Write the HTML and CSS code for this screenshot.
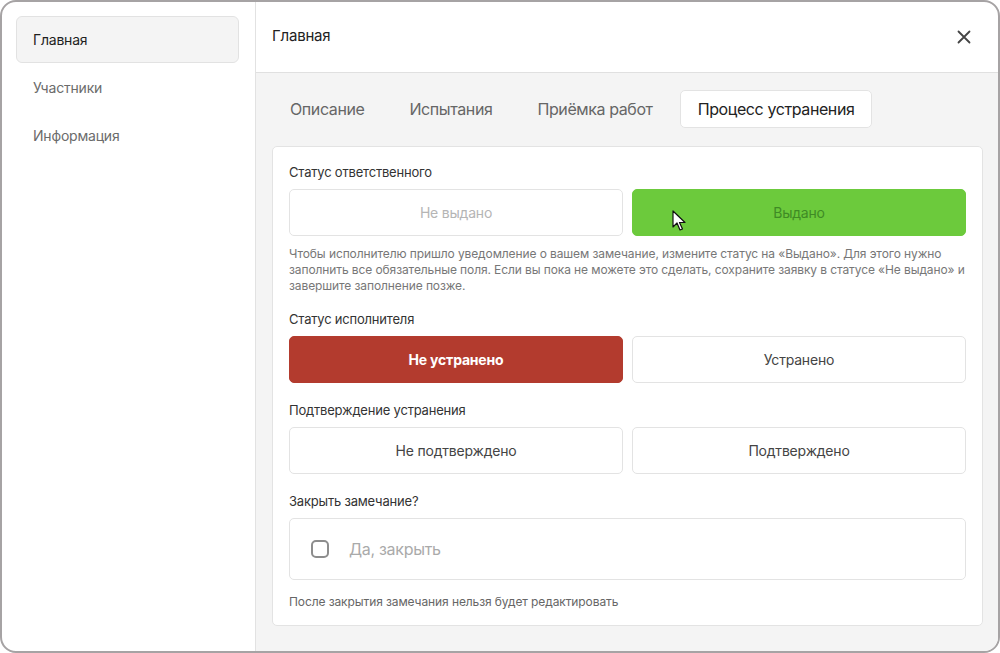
FILE: index.html
```html
<!DOCTYPE html>
<html lang="ru">
<head>
<meta charset="utf-8">
<link rel="stylesheet" href="styles.css">
</head>
<body>
<div class="frame">
  <aside class="sidebar">
    <div class="nav-item active">Главная</div>
    <div class="nav-item">Участники</div>
    <div class="nav-item">Информация</div>
  </aside>
  <main class="main">
    <header class="header">
      <div class="title">Главная</div>
      <svg class="close" width="14" height="14" viewBox="0 0 14 14"><path d="M1.5 1.5 L12.5 12.5 M12.5 1.5 L1.5 12.5" stroke="#444" stroke-width="1.8" stroke-linecap="round"/></svg>
    </header>
    <div class="content">
      <nav class="tabs">
        <div class="tab">Описание</div>
        <div class="tab">Испытания</div>
        <div class="tab">Приёмка работ</div>
        <div class="tab active">Процесс устранения</div>
      </nav>
      <section class="card">
        <div class="label">Статус ответственного</div>
        <div class="btn-row">
          <div class="btn muted">Не выдано</div>
          <div class="btn green">Выдано
            <svg class="cursor" width="14" height="22" viewBox="0 0 14 22"><path d="M1 1 L1 17 L5 13 L8 20 L10.5 19 L7.5 12.5 L13 12.5 Z" fill="#fff" stroke="#111" stroke-width="1.2" stroke-linejoin="round"/></svg>
          </div>
        </div>
        <p class="help">Чтобы исполнителю пришло уведомление о вашем замечание, измените статус на «Выдано». Для этого нужно заполнить все обязательные поля. Если вы пока не можете это сделать, сохраните заявку в статусе «Не выдано» и завершите заполнение позже.</p>
        <div class="label">Статус исполнителя</div>
        <div class="btn-row">
          <div class="btn red">Не устранено</div>
          <div class="btn">Устранено</div>
        </div>
        <div class="label">Подтверждение устранения</div>
        <div class="btn-row">
          <div class="btn">Не подтверждено</div>
          <div class="btn">Подтверждено</div>
        </div>
        <div class="label">Закрыть замечание?</div>
        <div class="check-box">
          <span class="check"></span>
          <span class="check-text">Да, закрыть</span>
        </div>
        <p class="note">После закрытия замечания нельзя будет редактировать</p>
      </section>
    </div>
  </main>
</div>
</body>
</html>
```

FILE: styles.css
```css
* { box-sizing: border-box; }
html, body { margin: 0; padding: 0; background: #fff; }
body {
  font-family: Inter, "Noto Sans", sans-serif;
  color: #333;
}
.frame {
  width: 1000px;
  height: 653px;
  border: 2px solid #a6a3a4;
  border-radius: 16px;
  overflow: hidden;
  display: flex;
  background: #fff;
}
.sidebar {
  width: 254px;
  flex: none;
  border-right: 1px solid #e2e2e2;
  padding: 14px 16px 0 14px;
  display: flex;
  flex-direction: column;
  gap: 1px;
}
.nav-item {
  height: 47px;
  display: flex;
  align-items: center;
  padding-left: 16px;
  font-size: 14px;
  color: #6b6b6b;
  border: 1px solid transparent;
  border-radius: 6px;
  letter-spacing: -0.2px;
}
.nav-item.active {
  background: #f4f4f4;
  border-color: #e2e2e2;
  color: #1f1f1f;
}
.main {
  flex: 1;
  display: flex;
  flex-direction: column;
  min-width: 0;
}
.header {
  height: 71px;
  flex: none;
  border-bottom: 1px solid #e0e0e0;
  display: flex;
  align-items: center;
  justify-content: space-between;
  padding: 0 27px 3px 16px;
}
.close { margin-top: 3px; }
.title {
  font-size: 15px;
  color: #222;
  letter-spacing: -0.2px;
}
.content {
  flex: 1;
  background: #f4f4f4;
  padding: 17px 15px 0 16px;
}
.tabs {
  display: flex;
  gap: 9px;
  height: 38px;
}
.tab {
  padding: 0 17px;
  display: flex;
  align-items: center;
  font-size: 16px;
  color: #666;
  border: 1px solid transparent;
  border-radius: 5px;
  letter-spacing: -0.4px;
}
.tab.active {
  background: #fff;
  border-color: #e3e3e3;
  color: #222;
}
.card {
  margin-top: 18px;
  background: #fff;
  border: 1px solid #e3e3e3;
  border-radius: 5px;
  padding: 17px 16px 15px 16px;
}
.label {
  font-size: 13px;
  line-height: 16px;
  color: #333;
  margin-bottom: 9px;
  letter-spacing: -0.2px;
}
.btn-row {
  display: grid;
  grid-template-columns: 1fr 1fr;
  gap: 9px;
  margin-bottom: 19px;
}
.btn {
  position: relative;
  height: 47px;
  border: 1px solid #e3e3e3;
  border-radius: 5px;
  display: flex;
  align-items: center;
  justify-content: center;
  font-size: 14px;
  color: #444;
  background: #fff;
  letter-spacing: -0.2px;
}
.btn.muted { color: #b5b5b5; }
.btn.green {
  background: #6cca3c;
  border-color: #6cca3c;
  color: #3f8a25;
}
.btn.red {
  background: #b33b2e;
  border-color: #b33b2e;
  color: #fff;
  font-weight: 700;
}
.cursor {
  position: absolute;
  left: 39px;
  top: 20px;
}
.help {
  margin: -9px 0 17px;
  font-size: 12px;
  line-height: 16px;
  color: #777;
  letter-spacing: -0.1px;
}
.check-box {
  height: 62px;
  border: 1px solid #e3e3e3;
  border-radius: 5px;
  display: flex;
  align-items: center;
  padding-left: 21px;
  gap: 20px;
  margin-bottom: 14px;
}
.check {
  width: 18px;
  height: 18px;
  border: 2px solid #8d8d8d;
  border-radius: 5px;
}
.check-text {
  font-size: 16px;
  color: #aaa;
  letter-spacing: -0.3px;
}
.note {
  margin: 0;
  font-size: 12px;
  line-height: 16px;
  color: #666;
  letter-spacing: -0.1px;
}
```
